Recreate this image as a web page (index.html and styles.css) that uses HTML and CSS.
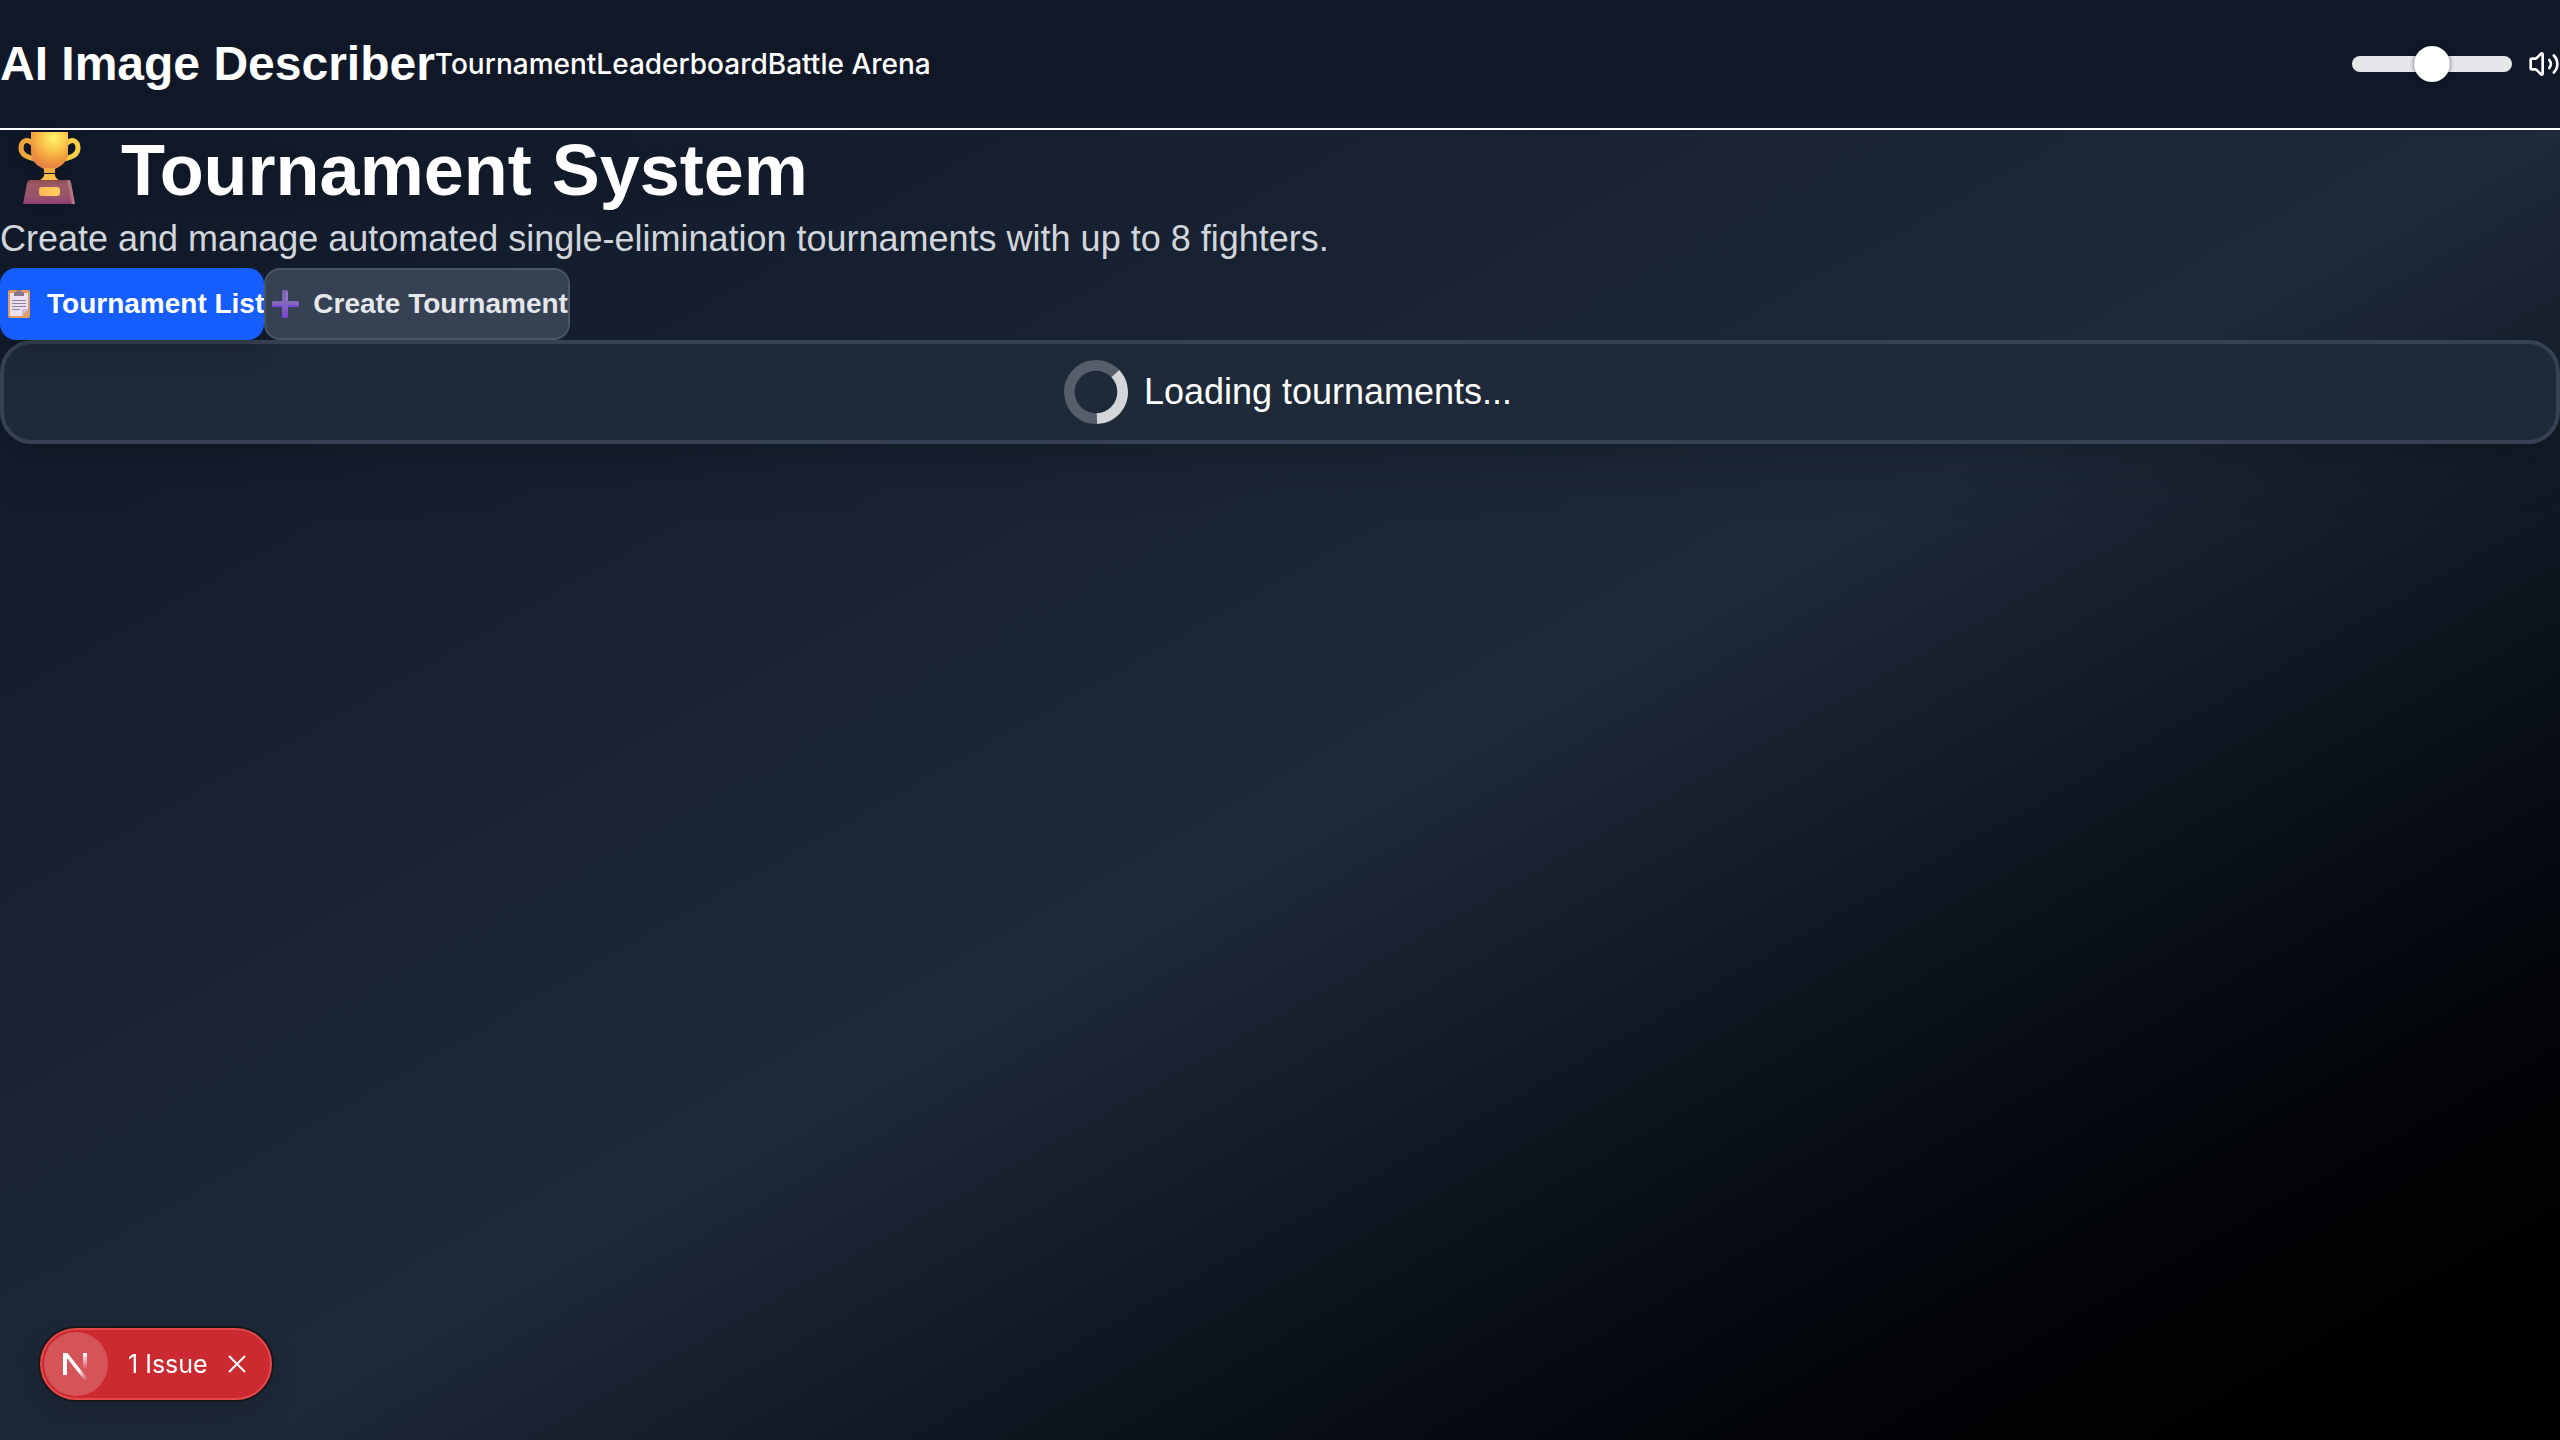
FILE: index.html
```html
<!DOCTYPE html>
<html lang="en">
<head>
<meta charset="utf-8">
<meta name="viewport" content="width=device-width, initial-scale=1">
<title>AI Image Describer</title>
<link rel="stylesheet" href="styles.css">
</head>
<body>
<header class="site-header">
  <a class="brand" href="#">AI Image Describer</a>
  <nav class="nav">
    <a href="#">Tournament</a>
    <a href="#">Leaderboard</a>
    <a href="#">Battle Arena</a>
  </nav>
  <div class="volume">
    <input class="slider" type="range" min="0" max="100" value="50" aria-label="Volume">
    <button class="mute" type="button" aria-label="Mute">
      <svg viewBox="0 0 24 24" width="32" height="32" fill="none" stroke="currentColor" stroke-width="2" stroke-linecap="round" stroke-linejoin="round">
        <path d="M11 4.702a.705.705 0 0 0-1.203-.498L6.413 7.587A1.4 1.4 0 0 1 5.416 8H3a1 1 0 0 0-1 1v6a1 1 0 0 0 1 1h2.416a1.4 1.4 0 0 1 .997.413l3.383 3.384A.705.705 0 0 0 11 19.298z"/>
        <path d="M16 9a5 5 0 0 1 0 6"/>
        <path d="M19.364 18.364a9 9 0 0 0 0-12.728"/>
      </svg>
    </button>
  </div>
</header>

<main class="page">
  <h1 class="title">
    <svg class="trophy" viewBox="0 0 100 80" aria-hidden="true">
      <defs>
        <radialGradient id="cup" cx="0.62" cy="0.15" r="0.9">
          <stop offset="0" stop-color="#fff46e"/>
          <stop offset="0.35" stop-color="#fcc94b"/>
          <stop offset="0.75" stop-color="#ee8f3b"/>
          <stop offset="1" stop-color="#e07a55"/>
        </radialGradient>
        <linearGradient id="handle" x1="0" y1="0" x2="1" y2="0">
          <stop offset="0" stop-color="#eba23a"/>
          <stop offset="1" stop-color="#fbd048"/>
        </linearGradient>
        <linearGradient id="base" x1="0" y1="0" x2="0" y2="1">
          <stop offset="0" stop-color="#8d4b50"/>
          <stop offset="0.2" stop-color="#9c5966"/>
          <stop offset="0.7" stop-color="#98546a"/>
          <stop offset="1" stop-color="#8c3f7a"/>
        </linearGradient>
        <linearGradient id="plate" x1="0" y1="0" x2="1" y2="0">
          <stop offset="0" stop-color="#fcb557"/>
          <stop offset="1" stop-color="#fdd05c"/>
        </linearGradient>
      </defs>
      <path d="M33 14C26 7 21 12 21 18C21 25 27 27 35 29M66 14C73 7 78 12 78 18C78 25 72 27 64 29" fill="none" stroke="url(#handle)" stroke-width="5"/>
      <path d="M44 44H55C54 46 57 49 60 51H39C42 49 45 46 44 44Z" fill="#f9bd48"/>
      <path d="M31 2H68V22C68 31 62 36 55 39Q49 41 44 39C37 36 31 31 31 22Z" fill="url(#cup)"/>
      <path d="M44 38H55V43H44Z" fill="#f3ab45"/>
      <path d="M30 50H68Q71 50 71 53L75 74H23L27 53Q28 50 30 50Z" fill="url(#base)"/>
      <path d="M67 50H68Q71 50 71 53L75 74H72Z" fill="#b37580"/>
      <rect x="39" y="57" width="21" height="9" rx="3" fill="url(#plate)"/>
    </svg>
    <span>Tournament System</span>
  </h1>
  <p class="lead">Create and manage automated single-elimination tournaments with up to 8 fighters.</p>

  <div class="tabs">
    <button class="tab tab-active" type="button">
      <svg class="tab-icon" viewBox="0 0 39 28" aria-hidden="true">
        <rect x="8" y="0" width="22" height="28" rx="2" fill="#e39a60"/>
        <path d="M10 3H28V19L22 26H10Z" fill="#eae0f1"/>
        <path d="M28 19L22 26V20Q22 19 23 19Z" fill="#c9bcd3"/>
        <path d="M14 6V3Q14 2 16 2Q17 0 19 0T22 2Q24 2 24 3V6Z" fill="#85788a"/>
        <path d="M12 10.500H26M12 13.500H26M12 16.500H26M12 19.500H20" stroke="#8d8293" stroke-width="1.200" fill="none"/>
      </svg>
      <span>Tournament List</span>
    </button>
    <button class="tab" type="button">
      <svg class="tab-icon" viewBox="0 0 39 28" aria-hidden="true">
        <defs>
          <linearGradient id="plus" x1="0" y1="0" x2="0" y2="1">
            <stop offset="0" stop-color="#7d62b5"/>
            <stop offset="0.45" stop-color="#8468bc"/>
            <stop offset="1" stop-color="#7d3fd6"/>
          </linearGradient>
        </defs>
        <path d="M16 1.500Q16 0 17.500 0H20.500Q22 0 22 1.500V11H31.500Q33 11 33 12.500V15.500Q33 17 31.500 17H22V26.500Q22 28 20.500 28H17.500Q16 28 16 26.500V17H7.500Q6 17 6 15.500V12.500Q6 11 7.500 11H16Z" fill="url(#plus)"/>
        <path d="M7 16H16M22 16H32" stroke="#7c3fdb" stroke-width="1.500"/>
        <path d="M21 2V11" stroke="#a690d4" stroke-width="1"/>
      </svg>
      <span>Create Tournament</span>
    </button>
  </div>

  <section class="card" role="status">
    <svg class="spinner" viewBox="0 0 24 24" fill="none" aria-hidden="true">
      <circle cx="12" cy="12" r="10" stroke="currentColor" stroke-width="4" opacity=".25"/>
      <path fill="currentColor" opacity=".75" d="M4 12a8 8 0 018-8V0C5.373 0 0 5.373 0 12h4zm2 5.291A7.962 7.962 0 014 12H0c0 3.042 1.135 5.824 3 7.938l3-2.647z"/>
    </svg>
    <span>Loading tournaments...</span>
  </section>
</main>

<div class="issue-badge">
  <button class="issue-logo" type="button" aria-label="Open developer tools">
    <svg viewBox="0 0 64 64" width="64" height="64" fill="none" aria-hidden="true">
      <defs>
        <linearGradient id="n-diagonal" gradientUnits="userSpaceOnUse" x1="35" y1="38" x2="43" y2="48">
          <stop offset="0" stop-color="#fff"/>
          <stop offset="1" stop-color="#fff" stop-opacity="0"/>
        </linearGradient>
        <linearGradient id="n-stem" gradientUnits="userSpaceOnUse" x1="41" y1="21" x2="41" y2="37">
          <stop offset="0" stop-color="#fff"/>
          <stop offset="1" stop-color="#fff" stop-opacity="0"/>
        </linearGradient>
      </defs>
      <path d="M19 21H23.500L43.500 46.500L40.500 48.500L23 26V43H19Z" fill="url(#n-diagonal)"/>
      <path d="M39 21H43V38H39Z" fill="url(#n-stem)"/>
    </svg>
  </button>
  <button class="issue-text" type="button">1 Issue</button>
  <button class="issue-close" type="button" aria-label="Dismiss">
    <svg viewBox="0 0 18 18" width="18" height="18" aria-hidden="true"><path d="M1 1L17 17M17 1L1 17" stroke="#fff" stroke-width="2"/></svg>
  </button>
</div>
</body>
</html>
```
FILE: styles.css
```css
* {
  box-sizing: border-box;
}

body {
  margin: 0;
  background: #101828;
  color: #fff;
  font-family: "Liberation Sans", Arial, Helvetica, sans-serif;
}

button {
  margin: 0;
  padding: 0;
  border: 0;
  background: none;
  color: inherit;
  font: inherit;
  cursor: pointer;
}

.site-header {
  display: flex;
  align-items: center;
  height: 130px;
  border-bottom: 2px solid #fff;
  background: #101828;
}

.brand {
  color: #fff;
  font-size: 48px;
  font-weight: 700;
  line-height: 64px;
  text-decoration: none;
}

.nav {
  display: flex;
  font-family: Inter, sans-serif;
  font-size: 28px;
  font-weight: 500;
  line-height: 40px;
}

.nav a {
  color: #fff;
  text-decoration: none;
}

.volume {
  display: flex;
  align-items: center;
  gap: 16px;
  margin-left: auto;
}

.slider {
  appearance: none;
  width: 160px;
  height: 16px;
  margin: 0;
  border-radius: 8px;
  background: #e5e7eb;
}

.slider::-webkit-slider-thumb {
  appearance: none;
  width: 36px;
  height: 36px;
  border-radius: 50%;
  background: #fff;
  box-shadow: 0 0 4px rgba(0, 0, 0, 0.6);
}

.mute {
  display: flex;
}

.page {
  min-height: calc(100vh - 130px);
  background: linear-gradient(to bottom right in oklab, #101828, #1e2939, #000) 0 0 / 100% 100vh no-repeat;
}

.title {
  display: flex;
  align-items: center;
  gap: 21px;
  margin: 0;
  font-size: 72px;
  line-height: 80px;
  filter: drop-shadow(0 8px 8px rgba(0, 0, 0, 0.15));
}

.trophy {
  width: 100px;
  height: 80px;
}

.lead {
  margin: 0;
  color: #d1d5dc;
  font-size: 36px;
  line-height: 58px;
}

.tabs {
  display: flex;
}

.tab {
  display: flex;
  align-items: center;
  gap: 8px;
  height: 72px;
  border: 2px solid #4a5565;
  border-radius: 16px;
  background: #364153;
  color: #e5e7eb;
  font-size: 28px;
  font-weight: 700;
  white-space: nowrap;
}

.tab-active {
  border: 0;
  background: #155dfc;
  color: #fff;
  box-shadow: 0 20px 30px -6px rgba(0, 0, 0, 0.1), 0 8px 12px -8px rgba(0, 0, 0, 0.1);
}

.tab-icon {
  width: 39px;
  height: 28px;
}

.card {
  display: flex;
  align-items: center;
  justify-content: center;
  gap: 16px;
  padding: 16px;
  border: 4px solid #364153;
  border-radius: 32px;
  background: #1e2939;
  box-shadow: 0 40px 50px -10px rgba(0, 0, 0, 0.1), 0 16px 20px -12px rgba(0, 0, 0, 0.1);
  font-size: 36px;
  line-height: 56px;
}

.spinner {
  width: 64px;
  height: 64px;
  margin-left: 16px;
  transform: rotate(178deg);
}

.issue-badge {
  position: fixed;
  bottom: 40px;
  left: 40px;
  display: flex;
  align-items: center;
  height: 72px;
  padding: 0 24px 0 2px;
  border: 2px solid #e5484d;
  border-radius: 36px;
  background: #ca2a30;
  box-shadow: 0 0 0 2px #171717, 0 16px 32px rgba(0, 0, 0, 0.15);
}

.issue-logo {
  display: flex;
  border-radius: 50%;
  background: rgba(255, 255, 255, 0.2);
}

.issue-text {
  margin: 0 20px;
  font-family: Inter, sans-serif;
  font-size: 25px;
  line-height: 32px;
}

.issue-close {
  display: flex;
}
```
